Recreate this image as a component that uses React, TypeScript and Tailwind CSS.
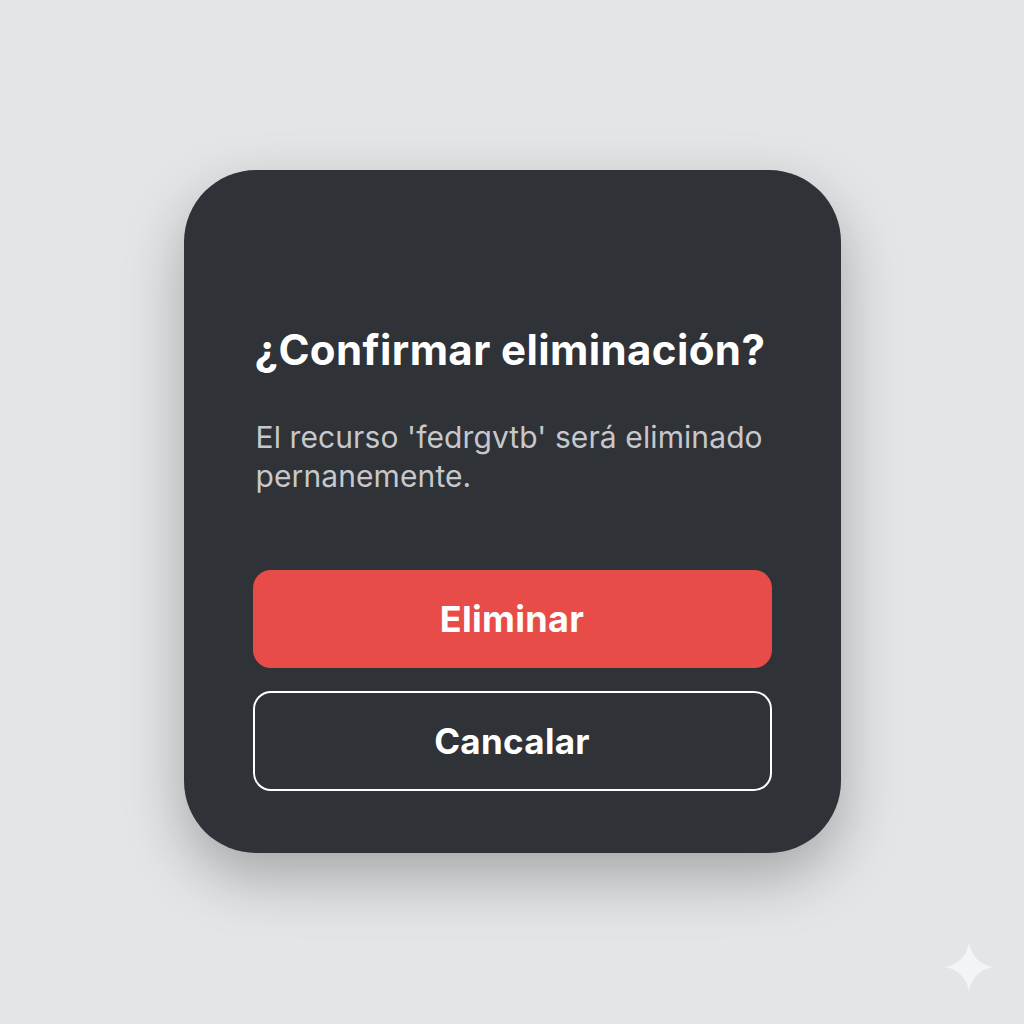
import React from "react";

export default function App() {
  return (
    <div
      className="relative w-[1024px] h-[1024px] bg-[#e3e5e7] flex items-start justify-center"
      style={{ fontFamily: "Inter, 'Noto Sans', sans-serif" }}
    >
      <div className="mt-[170px] w-[657px] h-[683px] rounded-[72px] bg-[#2f3237] shadow-[0_24px_60px_rgba(0,0,0,0.28)] px-[69px] pt-[155px] flex flex-col">
        <h1 className="pl-[2px] text-[42px] leading-[50px] font-bold text-white tracking-[0.4px] whitespace-nowrap">
          ¿Confirmar eliminación?
        </h1>
        <p className="pl-[3px] mt-[43px] text-[30px] leading-[39px] text-[#c6c8cb] tracking-[0.1px]">
          El recurso 'fedrgvtb' será eliminado pernanemente.
        </p>
        <button className="mt-[74px] h-[98px] w-full rounded-[18px] bg-[#e84c48] text-white text-[36px] font-bold tracking-[0.3px]">
          Eliminar
        </button>
        <button className="mt-[23px] h-[100px] w-full rounded-[18px] border-2 border-white text-white text-[35px] font-bold tracking-[0.3px]">
          Cancalar
        </button>
      </div>
      <svg
        className="absolute left-[944px] top-[942px]"
        width="50"
        height="50"
        viewBox="0 0 50 50"
      >
        <path
          d="M25 0 C27 14 36 23 50 25 C36 27 27 36 25 50 C23 36 14 27 0 25 C14 23 23 14 25 0 Z"
          fill="#f3f4f5"
        />
      </svg>
    </div>
  );
}
